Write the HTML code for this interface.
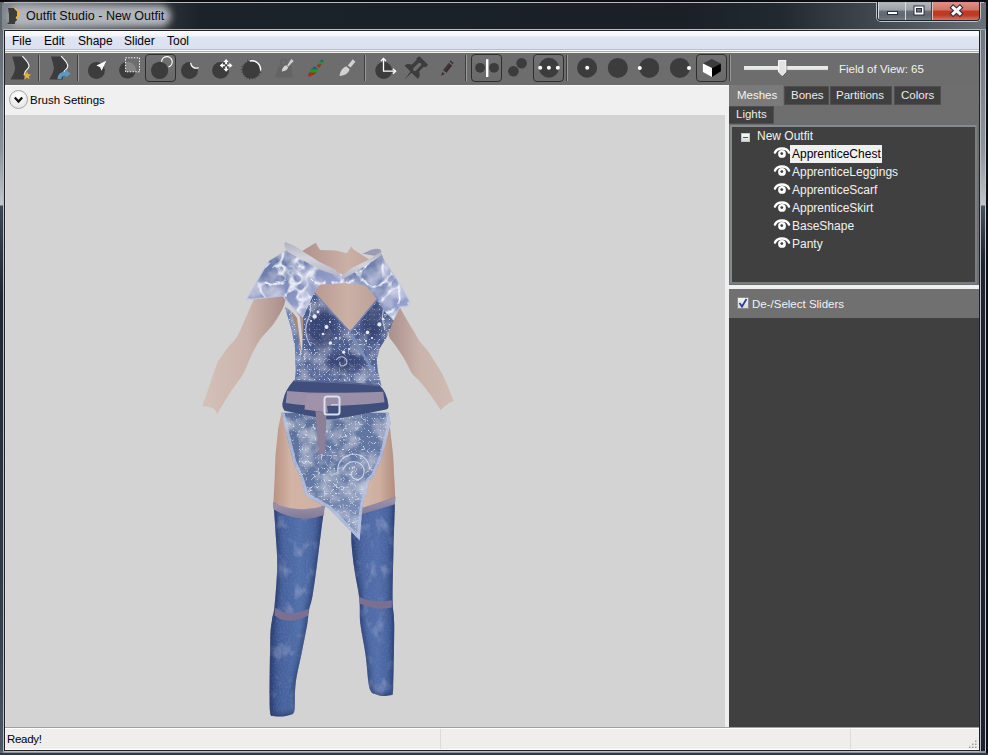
<!DOCTYPE html>
<html><head><meta charset="utf-8">
<style>
*{margin:0;padding:0;box-sizing:border-box}
html,body{width:988px;height:755px;overflow:hidden;background:#10151b}
body{position:relative;font-family:"Liberation Sans",sans-serif;font-size:12px;line-height:14px}
.a{position:absolute;white-space:nowrap}
.menu{top:34px;color:#000;font-size:12px}
.tab{height:19px;background:#3f3f3f;border:1px solid #4f4f4f}
.tt{color:#ececec;font-size:11.5px}
.ti{color:#f2f2f2;font-size:12px}
</style></head><body>
<!-- window frame -->
<div class="a" style="left:0;top:0;width:988px;height:755px;background:#5d656d"></div>
<div class="a" style="left:0;top:0;width:988px;height:2px;background:#0b0d10"></div>
<div class="a" style="left:986px;top:0;width:2px;height:755px;background:#0d1116"></div>
<div class="a" style="left:985px;top:30px;width:1px;height:722px;background:#c2c6ca"></div>
<div class="a" style="left:0;top:753px;width:988px;height:2px;background:#2c3946"></div>
<div class="a" style="left:3px;top:751px;width:983px;height:2px;background:#8c939a"></div>
<div class="a" style="left:0;top:30px;width:3px;height:721px;background:linear-gradient(#5f676f 0px,#8a939b 120px,#c3c8cd 175px,#3c4856 176px,#1e2732 270px,#34404c 600px,#4c5866 721px)"></div>
<div class="a" style="left:980px;top:30px;width:5px;height:721px;background:linear-gradient(#6f7880 0px,#8d959d 120px,#c0c5ca 175px,#45525f 176px,#1e2630 230px,#1a222c 721px)"></div>
<!-- title bar -->
<div class="a" style="left:2px;top:2px;width:984px;height:28px;border-radius:4px 4px 0 0;background:linear-gradient(90deg,#80868c 0px,#30363d 150px,#1c2229 200px,#1b2027 680px,#232930 780px,#4a5159 900px,#6a7178 988px)"></div>
<div class="a" style="left:4px;top:2px;width:980px;height:1px;background:#b7bbbf"></div>
<div class="a" style="left:8px;top:5px;width:163px;height:22px;border-radius:11px;background:#b2b6ba;filter:blur(3.5px)"></div>
<div class="a" style="left:3px;top:29px;width:983px;height:1px;background:#a2a8ae"></div>
<!-- title icon -->
<svg class="a" style="left:0;top:0" width="988" height="31">
<path d="M8 8 L14 8 L17 11 L17 20 L15 22 L15 24 L7 24 L9 22 L9 15 Z" fill="#3c3c3c"/>
<path d="M14.5 8 L16.5 10 L18.5 12 L18.5 16 L16.5 17 L16.5 19" stroke="#f0b530" stroke-width="1.2" fill="none"/>
</svg>
<div class="a" style="left:26px;top:9px;color:#0a0a10;font-size:12.5px">Outfit Studio - New Outfit</div>
<!-- caption buttons -->
<div class="a" style="left:876px;top:2px;width:105px;height:20px;border:1px solid #c0c4c8;border-top:none;border-radius:0 0 5px 5px"></div>
<div class="a" style="left:877px;top:2px;width:103px;height:19px;border:1px solid #20252b;border-top:none;border-radius:0 0 4px 4px;overflow:hidden">
  <div class="a" style="left:0;top:0;width:28px;height:18px;background:linear-gradient(#b3b8bd 0,#9ba1a7 8px,#6a7078 9px,#5f666e 13px,#737a82 18px);border-right:1px solid #d8dce0;border-left:1px solid #d8dce0"></div>
  <div class="a" style="left:28px;top:0;width:26px;height:18px;background:linear-gradient(#b3b8bd 0,#9ba1a7 8px,#6a7078 9px,#5f666e 13px,#737a82 18px);border-right:1px solid #40454b"></div>
  <div class="a" style="left:54px;top:0;width:49px;height:18px;background:linear-gradient(#dc9486 0,#cf7565 8px,#c23a22 9px,#bb3a25 13px,#d5735f 18px);border-left:1px solid #e8c0b8"></div>
</div>
<svg class="a" style="left:870px;top:0" width="118" height="24">
 <rect x="17.5" y="11.5" width="10" height="3" fill="#fff" stroke="#2a3040" stroke-width="1"/>
 <rect x="44" y="6" width="10" height="9" fill="#fff" stroke="#2a3040" stroke-width="1"/>
 <rect x="46.5" y="8.5" width="5" height="3.5" fill="#6d747c" stroke="#2a3040" stroke-width="1"/>
 <path d="M83.2 7.6 L89.8 13.6 M89.8 7.6 L83.2 13.6" stroke="#2a3040" stroke-width="5.2" stroke-linecap="square"/>
 <path d="M83.2 7.6 L89.8 13.6 M89.8 7.6 L83.2 13.6" stroke="#ffffff" stroke-width="3" stroke-linecap="square"/>
</svg>
<!-- client area -->
<div class="a" style="left:3px;top:29px;width:978px;height:723px;border:1px solid #b9bdc1;border-radius:2px"></div>
<div class="a" style="left:4px;top:30px;width:976px;height:721px;background:#1e2226"></div>
<div class="a" style="left:5px;top:31px;width:974px;height:719px;background:#6d6d6d"></div>
<!-- menubar -->
<div class="a" style="left:5px;top:31px;width:974px;height:18px;background:linear-gradient(#fcfcfe 0px,#f2f4fa 5px,#dfe4f1 6px,#dce1f0 18px)"></div>
<div class="a" style="left:5px;top:49px;width:974px;height:1px;background:#b6bccb"></div>
<div class="a" style="left:5px;top:50px;width:974px;height:1px;background:#fdfdfd"></div>
<div class="a" style="left:5px;top:51px;width:974px;height:1px;background:#a9a9a9"></div>
<div class="a" style="left:5px;top:52px;width:974px;height:1px;background:#f2f2f2"></div>
<div class="a menu" style="left:12px">File</div>
<div class="a menu" style="left:44px">Edit</div>
<div class="a menu" style="left:78px">Shape</div>
<div class="a menu" style="left:124px">Slider</div>
<div class="a menu" style="left:167px">Tool</div>
<!-- toolbar -->
<div class="a" style="left:5px;top:53px;width:974px;height:32px;background:#6d6d6d"></div>
<!-- brush settings header -->
<div class="a" style="left:5px;top:85px;width:724px;height:30px;background:#f0f0f0;border-top:1px solid #fbfbfb"></div>
<div class="a" style="left:5px;top:85px;width:1px;height:30px;background:#fafafa"></div>
<div class="a" style="left:9px;top:90px;width:19px;height:19px;border-radius:50%;border:1px solid #a6a6a6;background:radial-gradient(circle at 50% 30%,#ffffff 0,#f4f4f4 40%,#dedede 100%)"></div>
<svg class="a" style="left:0;top:84px" width="40" height="31"><path d="M14.8 13.6 L18.5 17.6 L22.2 13.6" stroke="#111" stroke-width="2.2" fill="none" stroke-linejoin="miter"/></svg>
<div class="a" style="left:30px;top:93px;color:#000;font-size:11.5px">Brush Settings</div>
<!-- viewport -->
<div class="a" style="left:5px;top:115px;width:720px;height:612px;background:#d3d3d3"></div>
<div class="a" style="left:5px;top:115px;width:1px;height:612px;background:#dcdcdc"></div>
<div class="a" style="left:725px;top:115px;width:4px;height:612px;background:#efefef"></div>
<!-- right panel -->
<div class="a" style="left:729px;top:85px;width:250px;height:642px;background:#6e6e6e"></div>
<div class="a" style="left:729px;top:85px;width:54px;height:21px;background:#7a7a7a"></div>
<div class="a tt" style="left:737px;top:88px;color:#f4f4f4">Meshes</div>
<div class="a tab" style="left:784px;top:86px;width:45px"></div>
<div class="a tt" style="left:791px;top:88px">Bones</div>
<div class="a tab" style="left:830px;top:86px;width:62px"></div>
<div class="a tt" style="left:836px;top:88px">Partitions</div>
<div class="a tab" style="left:894px;top:86px;width:47px"></div>
<div class="a tt" style="left:901px;top:88px">Colors</div>
<div class="a tab" style="left:729px;top:106px;width:45px;height:18px;border-left:none"></div>
<div class="a tt" style="left:736px;top:107px">Lights</div>
<!-- tree -->
<div class="a" style="left:730px;top:125px;width:247px;height:159px;background:#404040;border:2px solid #858a90;border-right-color:#7a7e84;border-bottom-color:#787c82"></div>
<div class="a" style="left:741px;top:133px;width:9px;height:9px;border:1px solid #c4c4c4;background:linear-gradient(#fbfbfb,#dadada)"></div>
<div class="a" style="left:743px;top:137px;width:5px;height:1px;background:#3a56a8"></div>
<div class="a ti" style="left:757px;top:129px">New Outfit</div>
<div class="a" style="left:790px;top:145px;width:92px;height:18px;background:#f0f0f0"></div>
<div class="a ti" style="left:792px;top:147px;color:#000">ApprenticeChest</div>
<div class="a ti" style="left:792px;top:165px">ApprenticeLeggings</div>
<div class="a ti" style="left:792px;top:183px">ApprenticeScarf</div>
<div class="a ti" style="left:792px;top:201px">ApprenticeSkirt</div>
<div class="a ti" style="left:792px;top:219px">BaseShape</div>
<div class="a ti" style="left:792px;top:237px">Panty</div>
<svg class="a" style="left:770px;top:140px" width="22" height="110">
 <g id="eye">
 <path d="M5 12.6 C6.5 9 9 8.6 12 8.6 C15 8.6 17.5 9 19 12.6" stroke="#fff" stroke-width="2.5" fill="none" stroke-linecap="round"/>
 <circle cx="12" cy="13.9" r="3.9" fill="#fff"/>
 <circle cx="11.8" cy="13.6" r="1.4" fill="#404040"/>
 </g>
 <use href="#eye" y="18"/><use href="#eye" y="36"/><use href="#eye" y="54"/><use href="#eye" y="72"/><use href="#eye" y="90"/>
</svg>
<!-- splitter + sliders header -->
<div class="a" style="left:729px;top:285px;width:250px;height:4px;background:#f0f0f0"></div>
<div class="a" style="left:729px;top:289px;width:250px;height:29px;background:#707070"></div>
<div class="a" style="left:737px;top:297px;width:12px;height:12px;border:1px solid #8a8a8a;background:linear-gradient(#f4f4f4,#d8d8d8)"></div>
<svg class="a" style="left:737px;top:297px" width="12" height="12"><path d="M2.5 6 L5 9.5 L9.5 2" stroke="#2a3f9a" stroke-width="1.8" fill="none"/></svg>
<div class="a" style="left:752px;top:297px;color:#f2f2f2;font-size:11.5px">De-/Select Sliders</div>
<div class="a" style="left:729px;top:318px;width:250px;height:409px;background:#404040"></div>
<!-- status bar -->
<div class="a" style="left:5px;top:727px;width:974px;height:1px;background:#a0a0a0"></div>
<div class="a" style="left:5px;top:728px;width:974px;height:22px;background:#f0eded;border-top:1px solid #fff;border-bottom:1px solid #fff"></div>
<div class="a" style="left:440px;top:729px;width:1px;height:20px;background:#dcdada"></div>
<div class="a" style="left:850px;top:729px;width:1px;height:20px;background:#dcdada"></div>
<div class="a" style="left:7px;top:732px;color:#000;font-size:11.5px;letter-spacing:-0.3px">Ready!</div>
<svg class="a" style="left:964px;top:738px" width="16" height="12"><g fill="#9a9a9a"><rect x="11" y="2.5" width="1.5" height="1.5"/><rect x="8" y="5.5" width="1.5" height="1.5"/><rect x="11" y="5.5" width="1.5" height="1.5"/><rect x="5" y="8.5" width="1.5" height="1.5"/><rect x="8" y="8.5" width="1.5" height="1.5"/><rect x="11" y="8.5" width="1.5" height="1.5"/></g></svg>
<!--TOOLBAR-->
<svg class="a" style="left:0;top:0" width="988" height="90">
 <defs>
  <linearGradient id="cbr" x1="0" y1="1" x2="0" y2="0">
   <stop offset="0" stop-color="#c02020"/><stop offset="0.3" stop-color="#8a3a20"/><stop offset="0.55" stop-color="#20a020"/><stop offset="0.75" stop-color="#1a7a50"/><stop offset="1" stop-color="#2030c0"/>
  </linearGradient>
  <linearGradient id="pen" x1="0" y1="0" x2="1" y2="1">
   <stop offset="0" stop-color="#5a4a48"/><stop offset="1" stop-color="#221818"/>
  </linearGradient>
  <linearGradient id="btn" x1="0" y1="0" x2="0" y2="1">
   <stop offset="0" stop-color="#727272"/><stop offset="1" stop-color="#6a6a6a"/>
  </linearGradient>
 </defs>
 <!-- separators -->
 <g fill="#3e3e3e">
  <rect x="38" y="55" width="1" height="26"/><rect x="77" y="55" width="1" height="26"/>
  <rect x="364" y="55" width="1" height="26"/><rect x="465" y="55" width="1" height="26"/>
  <rect x="566" y="55" width="1" height="26"/><rect x="729" y="55" width="1" height="26"/>
 </g>
 <g fill="#9a9a9a">
  <rect x="39" y="55" width="1" height="26"/><rect x="78" y="55" width="1" height="26"/>
  <rect x="365" y="55" width="1" height="26"/><rect x="466" y="55" width="1" height="26"/>
  <rect x="567" y="55" width="1" height="26"/><rect x="730" y="55" width="1" height="26"/>
 </g>
 <!-- active button frames -->
 <g fill="url(#btn)" stroke="#2e2e2e" stroke-width="1">
  <rect x="145.5" y="54.5" width="30" height="27" rx="3.5"/>
  <rect x="471.5" y="54.5" width="30" height="27" rx="3.5"/>
  <rect x="533.5" y="54.5" width="30" height="27" rx="3.5"/>
  <rect x="696.5" y="54.5" width="30" height="27" rx="3.5"/>
 </g>
 <!-- icon 1: body + star -->
 <g id="body">
  <path d="M12.3 56.6 L22.6 56.6 C25 59.5 28.8 62.5 29 66 C29.2 68.5 26.2 69.8 25.4 71.2 C24.8 73 24.2 76.5 23.8 79.6 L10.5 79.6 C12.5 76 15.2 71.5 15 67.5 C14.8 63.5 12.8 60 12.3 56.6 Z" fill="#3c3c3c"/>
  <path d="M22.4 56.2 C25 59.3 28.8 62.3 29 65.9 C29.2 68.5 26.2 69.8 25.4 71.2 C24.9 72.4 24.6 73.6 24.4 74.8" stroke="#ffffff" stroke-width="1.1" fill="none"/>
 </g>
 <path d="M27 71.2 L28.1 74.3 L31.3 74.4 L28.8 76.3 L29.7 79.4 L27 77.6 L24.3 79.4 L25.2 76.3 L22.7 74.4 L25.9 74.3 Z" fill="#e9b33a"/>
 <!-- icon 2 -->
 <use href="#body" x="38.8"/>
 <path d="M57.5 79 C57.8 73.5 61.5 71.5 65.5 71.8 L65.2 69.6 L70.6 73.6 L65.8 77.6 L65.6 75.4 C63 75.3 61.2 76.6 61.4 79 Z" fill="#5a9cc2"/>
 <!-- icon 3: circle + cursor -->
 <g fill="#3c3c3c">
  <circle cx="96.4" cy="70.5" r="8.5"/>
  <circle cx="127.5" cy="70.2" r="8.4"/>
  <circle cx="159.6" cy="70.4" r="8.6"/>
  <circle cx="189.5" cy="70.4" r="8.5"/>
  <circle cx="220.5" cy="70.4" r="8.4"/>
  <circle cx="383.7" cy="70.4" r="8.5"/>
  <circle cx="480.1" cy="67.8" r="4.9"/>
  <circle cx="494" cy="67.8" r="4.9"/>
  <circle cx="513.4" cy="71.3" r="5.3"/>
  <circle cx="521.6" cy="63.2" r="5.3"/>
  <circle cx="548.9" cy="67.8" r="10"/>
  <circle cx="587.1" cy="67.8" r="10"/>
  <circle cx="617.8" cy="67.9" r="10"/>
  <circle cx="649.2" cy="67.9" r="10"/>
  <circle cx="679.9" cy="67.9" r="10"/>
 </g>
 <path d="M106.3 60.8 L96.4 65.4 L100.1 67.2 L101.6 70.8 Z" fill="#fff"/>
 <!-- icon 4: dotted rect -->
 <path d="M125.8 71.7 L125.8 58.1 L139.6 58.1 L139.6 71.7 L125.8 71.7 Z" fill="none"/>
 <path d="M125.8 71.7 L135.9 71.7 A8.4 8.4 0 0 0 125.8 61.9 Z" fill="#858585"/>
 <rect x="125.5" y="57.8" width="14" height="14" fill="none" stroke="#fff" stroke-width="1" stroke-dasharray="1.4 1.4"/>
 <!-- icon 5: open circle -->
 <path d="M161.6 61.7 A5.3 5.3 0 1 1 168.5 67" stroke="#fff" stroke-width="1.2" fill="none"/>
 <!-- icon 6: crescent -->
 <circle cx="196.3" cy="62.2" r="5.6" fill="#6d6d6d"/>
 <path d="M190.6 62.8 A5.6 5.6 0 0 0 198.6 67.6" stroke="#fff" stroke-width="1.3" fill="none"/>
 <!-- icon 7: move arrows -->
 <g fill="#fff">
  <path d="M226.1 59 L223.4 62.1 L225.2 62.1 L225.2 64.2 L227 64.2 L227 62.1 L228.8 62.1 Z"/>
  <path d="M226.1 71.8 L223.4 68.7 L225.2 68.7 L225.2 66.6 L227 66.6 L227 68.7 L228.8 68.7 Z"/>
  <path d="M219.7 65.4 L222.8 62.7 L222.8 64.5 L224.9 64.5 L224.9 66.3 L222.8 66.3 L222.8 68.1 Z"/>
  <path d="M232.5 65.4 L229.4 62.7 L229.4 64.5 L227.3 64.5 L227.3 66.3 L229.4 66.3 L229.4 68.1 Z"/>
 </g>
 <!-- icon 8: spiky circle -->
 <circle cx="251.2" cy="69.8" r="8.8" fill="#3c3c3c"/>
 <path d="M249.6 62.4 L250.2 58.5 L251.4 62.3 Z M247.6 63.2 L247.1 59.3 L249.3 62.5 Z M245.9 64.4 L245.1 62.0 L247.3 63.3 Z M244.6 66.2 L243.1 64.0 L245.6 64.7 Z M243.8 68.2 L240.7 66.2 L244.4 66.5 Z M243.7 70.4 L240.2 69.3 L243.7 68.6 Z M244.1 72.5 L240.7 72.4 L243.7 70.7 Z M245.2 74.4 L242.3 75.0 L244.3 72.8 Z M246.7 75.9 L243.9 77.7 L245.4 74.7 Z M248.7 76.9 L246.4 79.4 L247.0 76.1 Z M250.8 77.3 L249.3 80.4 L249.0 77.0 Z M252.9 77.1 L252.3 79.8 L251.2 77.4 Z M255.0 76.4 L255.3 79.5 L253.3 77.1 Z M256.7 75.0 L257.8 77.8 L255.3 76.2 Z M257.9 73.2 L260.3 75.9 L256.9 74.7 Z M258.6 71.2 L262.1 73.2 L258.1 72.9 Z " fill="#3c3c3c"/>
 <path d="M249.8 61 A8.8 8.8 0 0 1 260.6 70.5" stroke="#fff" stroke-width="1.3" fill="none"/>
 <!-- icon 9: weight + brush -->
 <path d="M278.5 66 L291.2 66 L292.8 77.5 L275.2 77.5 Z" fill="#646464"/>
 <circle cx="283.7" cy="62.5" r="3" fill="none" stroke="#646464" stroke-width="1.6"/>
 <path d="M281.8 71.5 C282 68 283.5 66 286.2 65.2 L288.2 67.3 C287.5 70 285.2 71.3 281.8 71.5 Z" fill="#d2d2d2"/>
 <path d="M287.2 65.6 L291.3 58.9 L293.6 61 L288.2 66.8 Z" fill="#d2d2d2"/>
 <!-- icon 10: color brush -->
 <path d="M308 76.5 C308.5 71.5 311 68 315 66.5 L318.2 69.3 C317 73.5 313.5 76 308 76.5 Z" fill="url(#cbr)"/>
 <path d="M316.5 65.8 L321.6 59.3 L324.2 61.5 L319.2 67.8 Z" fill="url(#cbr)"/>
 <!-- icon 11: white brush -->
 <path d="M339.5 76 C340 71.3 342.3 67.8 346.3 66.3 L349.6 69.3 C348.5 73.3 345 75.6 339.5 76 Z" fill="#d2d2d2"/>
 <path d="M347.8 65.5 L352.8 59.3 L355.4 61.8 L350.6 67.6 Z" fill="#d2d2d2"/>
 <!-- icon 12: axis -->
 <g stroke="#fff" stroke-width="1.3" fill="none">
  <path d="M383.5 58.5 L383.5 71.2 L395.5 71.2"/>
  <path d="M381 61 L383.5 58.4 L386 61"/>
  <path d="M393 68.7 L395.6 71.2 L393 73.7"/>
 </g>
 <!-- icon 13: pin -->
 <path d="M419.3 56.3 L428.1 64.8 L425.5 67.5 L424 66.5 L419.2 71.3 L419.8 75.8 L418 79 L411.5 72.7 L404.6 79.6 L410.5 71.5 L404.4 65.6 L407.5 64 L412 64.5 L416.8 59.8 L416.2 58.4 Z" fill="#3c3c3c"/>
 <path d="M413.3 68.3 L418.5 63.1 A1.8 1.8 0 0 1 421 65.6 L415.8 70.8 A1.8 1.8 0 0 1 413.3 68.3 Z" fill="#6d6d6d"/>
 <!-- icon 14: pencil -->
 <path d="M443 70 L448.8 62.8 L452.2 65.6 L446.4 72.8 Z" fill="url(#pen)"/>
 <path d="M449.6 61.6 L450.6 60.4 L453.4 63 L452.8 64.2 Z" fill="#3a2a2a"/>
 <path d="M441.2 75.8 L442.2 72 L444.6 74 Z" fill="#3a2a2a"/>
 <!-- mirror icon -->
 <rect x="486" y="59.2" width="2.4" height="17.8" fill="#fff"/>
 <!-- dots -->
 <g fill="#fff">
  <circle cx="540.2" cy="67.8" r="2"/><circle cx="548.9" cy="67.8" r="2"/><circle cx="557.8" cy="67.8" r="2"/>
  <circle cx="587.2" cy="67.8" r="2"/>
  <circle cx="639.8" cy="67.9" r="2"/>
  <circle cx="689" cy="67.9" r="2"/>
 </g>
 <!-- cube -->
 <path d="M711.8 59.1 L720.9 63.4 L712 67.9 L702.9 63.4 Z" fill="#3c3c3c"/>
 <path d="M702.9 63.4 L712 67.9 L712 77 L702.9 72 Z" fill="#ffffff"/>
 <path d="M712 67.9 L720.9 63.4 L720.9 71.2 L712 77 Z" fill="#000000"/>
 <!-- slider -->
 <rect x="744" y="66" width="84" height="4" fill="#e8eaea"/><rect x="744" y="69.5" width="84" height="0.8" fill="#9a9a9a" opacity="0.5"/>
 <path d="M778.5 60.5 L786 60.5 L786 71.8 L782.2 75.6 L778.5 71.8 Z" fill="#e2e2e2" stroke="#fafafa" stroke-width="1"/>
 <path d="M786.8 61 L786.8 72 L782.6 76.4" stroke="#505050" stroke-width="0.8" fill="none" opacity="0.6"/>
</svg>
<div class="a" style="left:839px;top:62px;color:#f2f2f2;font-size:11.5px">Field of View: 65</div>

<!--FIGURE-->
<svg class="a" style="left:0;top:0" width="988" height="755">
 <defs>
  <linearGradient id="skinL" gradientUnits="userSpaceOnUse" x1="205" y1="0" x2="285" y2="0">
   <stop offset="0" stop-color="#d3c0b8"/><stop offset="0.55" stop-color="#cbb4ac"/><stop offset="1" stop-color="#aa8f89"/>
  </linearGradient>
  <linearGradient id="skinR" gradientUnits="userSpaceOnUse" x1="390" y1="0" x2="455" y2="0">
   <stop offset="0" stop-color="#ab918b"/><stop offset="0.45" stop-color="#c9b3ab"/><stop offset="1" stop-color="#d0bcb4"/>
  </linearGradient>
  <linearGradient id="skinC" gradientUnits="userSpaceOnUse" x1="300" y1="0" x2="395" y2="0">
   <stop offset="0" stop-color="#ae918b"/><stop offset="0.5" stop-color="#cbb0a6"/><stop offset="1" stop-color="#b39892"/>
  </linearGradient>
  <linearGradient id="thighL" gradientUnits="userSpaceOnUse" x1="273" y1="0" x2="325" y2="0">
   <stop offset="0" stop-color="#b89282"/><stop offset="0.35" stop-color="#d2b4a5"/><stop offset="1" stop-color="#cfb0a2"/>
  </linearGradient>
  <linearGradient id="thighR" gradientUnits="userSpaceOnUse" x1="355" y1="0" x2="396" y2="0">
   <stop offset="0" stop-color="#d6bcad"/><stop offset="0.6" stop-color="#cdae9f"/><stop offset="1" stop-color="#b08c7e"/>
  </linearGradient>
  <linearGradient id="legL" gradientUnits="userSpaceOnUse" x1="270" y1="0" x2="324" y2="0">
   <stop offset="0" stop-color="#324a84"/><stop offset="0.2" stop-color="#45609c"/><stop offset="0.55" stop-color="#5270aa"/><stop offset="0.85" stop-color="#46619c"/><stop offset="1" stop-color="#354d86"/>
  </linearGradient>
  <linearGradient id="legR" gradientUnits="userSpaceOnUse" x1="351" y1="0" x2="396" y2="0">
   <stop offset="0" stop-color="#354d86"/><stop offset="0.3" stop-color="#4d68a4"/><stop offset="0.6" stop-color="#526eaa"/><stop offset="0.9" stop-color="#435e9a"/><stop offset="1" stop-color="#31487f"/>
  </linearGradient>
  <linearGradient id="dress" x1="0" y1="0" x2="0" y2="1">
   <stop offset="0" stop-color="#4c5c8c"/><stop offset="0.6" stop-color="#506294"/><stop offset="1" stop-color="#5a6c9c"/>
  </linearGradient>
  <linearGradient id="padL" gradientUnits="userSpaceOnUse" x1="255" y1="250" x2="310" y2="315">
   <stop offset="0" stop-color="#62729f"/><stop offset="0.5" stop-color="#7888b6"/><stop offset="1" stop-color="#a0a8d2"/>
  </linearGradient>
  <linearGradient id="padR" gradientUnits="userSpaceOnUse" x1="350" y1="260" x2="405" y2="315">
   <stop offset="0" stop-color="#6a7aa8"/><stop offset="0.5" stop-color="#7a8ab8"/><stop offset="1" stop-color="#9ca6d0"/>
  </linearGradient>
  <linearGradient id="skirt" gradientUnits="userSpaceOnUse" x1="300" y1="415" x2="360" y2="540">
   <stop offset="0" stop-color="#5c709c"/><stop offset="0.55" stop-color="#667aa6"/><stop offset="1" stop-color="#8e9ec4"/>
  </linearGradient>
  <filter id="spk3" x="-5%" y="-5%" width="110%" height="110%">
   <feTurbulence type="turbulence" baseFrequency="0.06" numOctaves="2" seed="13" result="n"/>
   <feColorMatrix in="n" type="matrix" values="0 0 0 0 0.9  0 0 0 0 0.93  0 0 0 0 1  -5 0 0 0 0.95" result="w"/>
   <feComposite in="w" in2="SourceAlpha" operator="in" result="wm"/>
   <feTurbulence type="fractalNoise" baseFrequency="0.05" numOctaves="3" seed="21" result="n2"/>
   <feColorMatrix in="n2" type="matrix" values="0 0 0 0 0.82  0 0 0 0 0.82  0 0 0 0 0.95  1.5 0 0 0 -0.6" result="w2"/>
   <feComposite in="w2" in2="SourceAlpha" operator="in" result="wm2"/>
   <feMerge><feMergeNode in="SourceGraphic"/><feMergeNode in="wm2"/><feMergeNode in="wm"/></feMerge>
  </filter>
  <filter id="spk4" x="-5%" y="-5%" width="110%" height="110%">
   <feTurbulence type="turbulence" baseFrequency="0.2" numOctaves="2" seed="5" result="n"/>
   <feColorMatrix in="n" type="matrix" values="0 0 0 0 0.85  0 0 0 0 0.88  0 0 0 0 1  -6 0 0 0 0.65" result="w"/>
   <feComposite in="w" in2="SourceAlpha" operator="in" result="wm"/>
   <feTurbulence type="fractalNoise" baseFrequency="0.06" numOctaves="3" seed="31" result="n2"/>
   <feColorMatrix in="n2" type="matrix" values="0 0 0 0 0.75  0 0 0 0 0.8  0 0 0 0 0.92  1.2 0 0 0 -0.55" result="w2"/>
   <feComposite in="w2" in2="SourceAlpha" operator="in" result="wm2"/>
   <feMerge><feMergeNode in="SourceGraphic"/><feMergeNode in="wm2"/><feMergeNode in="wm"/></feMerge>
  </filter>
  <filter id="spk2" x="-5%" y="-5%" width="110%" height="110%">
   <feTurbulence type="turbulence" baseFrequency="0.16" numOctaves="2" seed="9" result="n"/>
   <feColorMatrix in="n" type="matrix" values="0 0 0 0 0.86  0 0 0 0 0.9  0 0 0 0 1  -6 0 0 0 0.7" result="w"/>
   <feComposite in="w" in2="SourceAlpha" operator="in" result="wm"/>
   <feTurbulence type="fractalNoise" baseFrequency="0.05" numOctaves="3" seed="21" result="n2"/>
   <feColorMatrix in="n2" type="matrix" values="0 0 0 0 0.8  0 0 0 0 0.84  0 0 0 0 0.94  1.4 0 0 0 -0.58" result="w2"/>
   <feComposite in="w2" in2="SourceAlpha" operator="in" result="wm2"/>
   <feMerge><feMergeNode in="SourceGraphic"/><feMergeNode in="wm2"/><feMergeNode in="wm"/></feMerge>
  </filter>
  <linearGradient id="band" x1="0" y1="0" x2="0" y2="1">
   <stop offset="0" stop-color="#9e94ac"/><stop offset="1" stop-color="#837a98"/>
  </linearGradient>
  <filter id="spk" x="-5%" y="-5%" width="110%" height="110%">
   <feTurbulence type="turbulence" baseFrequency="0.09" numOctaves="2" seed="4" result="n"/>
   <feColorMatrix in="n" type="matrix" values="0 0 0 0 0.88  0 0 0 0 0.91  0 0 0 0 1  -6 0 0 0 0.85" result="w"/>
   <feComposite in="w" in2="SourceAlpha" operator="in" result="wm"/>
   <feTurbulence type="fractalNoise" baseFrequency="0.05" numOctaves="3" seed="21" result="n2"/>
   <feColorMatrix in="n2" type="matrix" values="0 0 0 0 0.8  0 0 0 0 0.82  0 0 0 0 0.92  1.6 0 0 0 -0.62" result="w2"/>
   <feComposite in="w2" in2="SourceAlpha" operator="in" result="wm2"/>
   <feMerge><feMergeNode in="SourceGraphic"/><feMergeNode in="wm2"/><feMergeNode in="wm"/></feMerge>
  </filter>
  <filter id="mot" x="-5%" y="-5%" width="110%" height="110%">
   <feTurbulence type="fractalNoise" baseFrequency="0.08 0.05" numOctaves="4" seed="11" result="n"/>
   <feColorMatrix in="n" type="matrix" values="0 0 0 0 0.5  0 0 0 0 0.6  0 0 0 0 0.85  0.9 0 0 0 -0.5" result="w"/>
   <feComposite in="w" in2="SourceAlpha" operator="in" result="wm"/>
   <feTurbulence type="fractalNoise" baseFrequency="0.6" numOctaves="1" seed="3" result="g"/>
   <feColorMatrix in="g" type="matrix" values="0 0 0 0 0.2  0 0 0 0 0.28  0 0 0 0 0.5  0.6 0 0 0 -0.25" result="gw"/>
   <feComposite in="gw" in2="SourceAlpha" operator="in" result="gm"/>
   <feMerge><feMergeNode in="SourceGraphic"/><feMergeNode in="wm"/><feMergeNode in="gm"/></feMerge>
  </filter>
 </defs>
 <!-- arms -->
 <path d="M254.7 298.0 C252.1 302.7 247.6 313.8 244.6 320.4 C241.6 327.0 239.2 333.2 236.5 337.6 C233.8 342.0 231.0 343.5 228.4 346.7 C225.8 349.9 222.9 354.2 221.0 357.0 C219.1 359.8 219.1 358.7 217.2 363.3 C215.3 367.9 212.3 377.4 209.8 384.5 C207.3 391.6 203.6 402.6 202.4 406.2 C203.3 406.3 205.7 406.3 207.6 406.7 C209.5 407.1 212.4 407.6 214.0 408.8 C215.6 410.0 216.7 413.2 217.2 414.1 C219.3 410.6 225.7 399.5 229.9 393.0 C234.1 386.5 239.9 379.1 242.6 375.0 C245.2 370.9 244.2 372.1 245.8 368.6 C247.4 365.1 249.6 358.8 252.1 353.8 C254.6 348.8 257.2 343.7 260.8 338.6 C264.4 333.5 270.0 329.0 273.9 323.4 C277.8 317.8 282.1 310.3 284.1 305.2 C286.1 300.1 285.7 295.0 286.0 293.0 C281.7 292.8 264.3 292.2 260.0 292.0 C259.1 293.0 257.3 293.3 254.7 298.0 Z" fill="url(#skinL)"/>
 <path d="M399.4 300.0 C399.4 300.9 398.2 302.4 399.4 305.7 C400.6 308.9 404.3 315.2 406.7 319.5 C409.1 323.8 411.9 328.0 414.0 331.6 C416.1 335.2 417.2 338.0 419.6 341.3 C422.0 344.6 425.7 348.0 428.4 351.7 C431.1 355.4 433.1 358.9 435.8 363.3 C438.5 367.7 441.3 371.9 444.3 378.2 C447.3 384.5 452.2 397.2 453.8 401.0 C452.9 401.4 450.7 402.1 448.5 403.6 C446.3 405.1 441.9 408.9 440.6 410.0 C438.9 407.5 433.9 399.9 430.5 395.1 C427.1 390.3 422.9 384.9 419.9 381.4 C416.9 377.9 414.6 376.7 412.5 373.9 C410.4 371.1 408.8 367.4 407.2 364.4 C405.6 361.4 404.9 359.6 402.6 356.0 C400.4 352.4 396.0 346.5 393.7 343.0 C391.4 339.5 389.2 338.7 388.9 334.9 C388.6 331.1 391.2 326.1 392.1 320.3 C393.0 314.5 393.7 303.4 394.0 300.0 C394.9 300.0 398.5 300.0 399.4 300.0 Z" fill="url(#skinR)"/>
 <!-- torso skin -->
 <path d="M302.3 251 L315.6 242.7 L320.1 249.9 L335.7 250.5 L346.8 253.3 L351.3 246.6 L353.5 249.4 L368 258.8 L378 260 L394 300 L392.2 323.8 L387.4 335.7 L380.3 347.6 L350 348 L303 345 L300 317 L288 300 Z" fill="url(#skinC)"/>
 <path d="M291.5 311 L297 318 L301.5 352 L296.5 342 L293 326 Z" fill="#a8887e"/>
 <!-- thighs -->
 <path d="M281.5 413 L278.3 427.5 L275.5 455 L274.6 480 L273.4 502.4 L298 512 L324.6 505.8 L340 498 L363.3 508.4 L395.2 497.2 L394.3 480 L393 455 L390.6 433.9 L388.5 413 Z" fill="url(#thighL)"/>
 <path d="M360 413 L388.5 413 L390.6 433.9 L393 455 L394.3 480 L395.2 497.2 L363.3 508.4 L355 480 Z" fill="url(#thighR)"/>
 <!-- legs -->
 <g filter="url(#mot)">
  <path d="M273.4 502.4 C277.5 504.0 289.5 511.3 298.0 511.9 C306.5 512.5 320.2 506.8 324.6 505.8 C324.0 510.1 322.4 521.7 321.1 531.7 C319.8 541.8 318.2 555.4 316.8 566.1 C315.4 576.8 313.8 588.7 312.5 596.0 C311.2 603.3 309.9 605.4 309.0 610.0 C308.1 614.6 308.5 616.8 307.4 623.6 C306.2 630.4 304.1 641.1 302.1 651.0 C300.2 660.9 296.9 673.4 295.7 682.9 C294.5 692.4 295.1 703.1 294.7 708.3 C294.2 713.5 293.3 713.0 293.0 714.0 C291.3 714.4 286.5 716.2 283.0 716.5 C279.5 716.8 273.8 716.1 272.0 716.0 C271.6 714.3 270.0 718.7 269.7 706.0 C269.4 693.3 269.9 654.3 270.3 640.0 C270.7 625.7 271.3 625.6 272.0 620.0 C272.7 614.4 273.6 615.6 274.5 606.6 C275.4 597.6 277.0 578.5 277.2 566.0 C277.4 553.5 276.1 542.3 275.5 531.7 C274.9 521.1 273.8 507.3 273.4 502.4 Z" fill="url(#legL)"/>
  <path d="M363.3 508.4 C368.6 506.5 389.9 499.1 395.2 497.2 C394.9 505.8 393.9 531.7 393.5 548.9 C393.1 566.1 392.5 588.0 392.6 600.5 C392.7 613.0 394.1 609.2 394.2 623.6 C394.3 638.0 393.6 675.2 393.2 687.1 C392.8 699.0 392.2 693.7 392.0 695.0 C390.3 695.2 385.3 696.3 382.0 696.0 C378.7 695.7 373.7 693.5 372.0 693.0 C371.5 691.7 369.9 691.3 368.8 685.0 C367.7 678.7 367.0 665.5 365.6 655.3 C364.2 645.1 361.4 633.1 360.3 623.6 C359.2 614.1 360.4 607.7 359.3 598.1 C358.2 588.5 355.2 576.9 353.9 566.1 C352.6 555.3 350.9 541.9 351.3 533.4 C351.7 524.9 354.0 519.2 356.0 515.0 C358.0 510.8 362.1 509.5 363.3 508.4 Z" fill="url(#legR)"/>
 </g>
 <clipPath id="lclip"><path d="M273.4 502.4 C277.5 504.0 289.5 511.3 298.0 511.9 C306.5 512.5 320.2 506.8 324.6 505.8 C324.0 510.1 322.4 521.7 321.1 531.7 C319.8 541.8 318.2 555.4 316.8 566.1 C315.4 576.8 313.8 588.7 312.5 596.0 C311.2 603.3 309.9 605.4 309.0 610.0 C308.1 614.6 308.5 616.8 307.4 623.6 C306.2 630.4 304.1 641.1 302.1 651.0 C300.2 660.9 296.9 673.4 295.7 682.9 C294.5 692.4 295.1 703.1 294.7 708.3 C294.2 713.5 293.3 713.0 293.0 714.0 C291.3 714.4 286.5 716.2 283.0 716.5 C279.5 716.8 273.8 716.1 272.0 716.0 C271.6 714.3 270.0 718.7 269.7 706.0 C269.4 693.3 269.9 654.3 270.3 640.0 C270.7 625.7 271.3 625.6 272.0 620.0 C272.7 614.4 273.6 615.6 274.5 606.6 C275.4 597.6 277.0 578.5 277.2 566.0 C277.4 553.5 276.1 542.3 275.5 531.7 C274.9 521.1 273.8 507.3 273.4 502.4 Z"/><path d="M363.3 508.4 C368.6 506.5 389.9 499.1 395.2 497.2 C394.9 505.8 393.9 531.7 393.5 548.9 C393.1 566.1 392.5 588.0 392.6 600.5 C392.7 613.0 394.1 609.2 394.2 623.6 C394.3 638.0 393.6 675.2 393.2 687.1 C392.8 699.0 392.2 693.7 392.0 695.0 C390.3 695.2 385.3 696.3 382.0 696.0 C378.7 695.7 373.7 693.5 372.0 693.0 C371.5 691.7 369.9 691.3 368.8 685.0 C367.7 678.7 367.0 665.5 365.6 655.3 C364.2 645.1 361.4 633.1 360.3 623.6 C359.2 614.1 360.4 607.7 359.3 598.1 C358.2 588.5 355.2 576.9 353.9 566.1 C352.6 555.3 350.9 541.9 351.3 533.4 C351.7 524.9 354.0 519.2 356.0 515.0 C358.0 510.8 362.1 509.5 363.3 508.4 Z"/></clipPath>
 <filter id="bl2"><feGaussianBlur stdDeviation="2.2"/></filter>
 <g clip-path="url(#lclip)"><g filter="url(#bl2)" fill="none" stroke="#22325e" stroke-width="6" opacity="0.55"><path d="M273.4 502.4 C277.5 504.0 289.5 511.3 298.0 511.9 C306.5 512.5 320.2 506.8 324.6 505.8 C324.0 510.1 322.4 521.7 321.1 531.7 C319.8 541.8 318.2 555.4 316.8 566.1 C315.4 576.8 313.8 588.7 312.5 596.0 C311.2 603.3 309.9 605.4 309.0 610.0 C308.1 614.6 308.5 616.8 307.4 623.6 C306.2 630.4 304.1 641.1 302.1 651.0 C300.2 660.9 296.9 673.4 295.7 682.9 C294.5 692.4 295.1 703.1 294.7 708.3 C294.2 713.5 293.3 713.0 293.0 714.0 C291.3 714.4 286.5 716.2 283.0 716.5 C279.5 716.8 273.8 716.1 272.0 716.0 C271.6 714.3 270.0 718.7 269.7 706.0 C269.4 693.3 269.9 654.3 270.3 640.0 C270.7 625.7 271.3 625.6 272.0 620.0 C272.7 614.4 273.6 615.6 274.5 606.6 C275.4 597.6 277.0 578.5 277.2 566.0 C277.4 553.5 276.1 542.3 275.5 531.7 C274.9 521.1 273.8 507.3 273.4 502.4 Z"/><path d="M363.3 508.4 C368.6 506.5 389.9 499.1 395.2 497.2 C394.9 505.8 393.9 531.7 393.5 548.9 C393.1 566.1 392.5 588.0 392.6 600.5 C392.7 613.0 394.1 609.2 394.2 623.6 C394.3 638.0 393.6 675.2 393.2 687.1 C392.8 699.0 392.2 693.7 392.0 695.0 C390.3 695.2 385.3 696.3 382.0 696.0 C378.7 695.7 373.7 693.5 372.0 693.0 C371.5 691.7 369.9 691.3 368.8 685.0 C367.7 678.7 367.0 665.5 365.6 655.3 C364.2 645.1 361.4 633.1 360.3 623.6 C359.2 614.1 360.4 607.7 359.3 598.1 C358.2 588.5 355.2 576.9 353.9 566.1 C352.6 555.3 350.9 541.9 351.3 533.4 C351.7 524.9 354.0 519.2 356.0 515.0 C358.0 510.8 362.1 509.5 363.3 508.4 Z"/></g></g>
 <!-- bands -->
 <path d="M273.4 502.4 Q298 514 324.6 505.8 L324 515.3 Q298 524 273.6 509.6 Z" fill="url(#band)"/>
 <path d="M360 508.6 L395.2 497.2 L395 504.2 L361 514.6 Z" fill="url(#band)"/>
 <path d="M275.2 607.8 Q288 618 308.6 608.8 L308 615.8 Q288 626 274.5 615.6 Z" fill="#7c7092"/>
 <path d="M359.4 597 Q375 604 391.8 600.2 L391.8 607.6 Q375 611 359.6 603.6 Z" fill="#7c7092"/>
 <!-- top clothing -->
 <g filter="url(#spk4)">
  <path d="M284.9 307.1 L291.5 329.8 L295 347.6 L295.6 371.4 L294 390 L299 390 L300.5 371 L300 347 L297 330 L290 310 Z" fill="#6478aa"/>
  <path d="M303 317 L314.5 292.3 L350.1 331.2 L376.9 299 L385 312 L398 309.5 L392.2 323.8 L387.4 335.7 L380.3 347.6 L376.7 359.5 L377.9 371.4 L381.5 386 L296 386 L298 371 L302.2 347.6 L303.4 329.8 Z" fill="url(#dress)"/>

 </g>
 <g filter="url(#spk3)">
  <path d="M285.3 242.2 L288 249.3 L268.6 261.2 L246.6 299.4 L255.5 298.8 L282.9 295.8 L287.7 301.8 L296 311.3 L303.2 317.2 L309 304 L314.5 292.3 L320 284.5 L345 283 L345 276 L300 255 Z" fill="url(#padL)"/>
  <path d="M344 283 L365.7 285.6 L376.9 299 L385 312 L393.4 320.2 L399.7 306.7 L408.2 305.9 L410 301.8 L393.9 274.3 L385 262 L381.5 254 L350 272 L344 276 Z" fill="url(#padR)"/>
 </g>
 <clipPath id="dclip"><path d="M303 317 L314.5 292.3 L350.1 331.2 L376.9 299 L385 312 L398 309.5 L392.2 323.8 L387.4 335.7 L380.3 347.6 L376.7 359.5 L377.9 371.4 L381.5 386 L296 386 L298 371 L302.2 347.6 L303.4 329.8 Z"/></clipPath>
 <filter id="bl1"><feGaussianBlur stdDeviation="3"/></filter>
 <filter id="bl05"><feGaussianBlur stdDeviation="0.5"/></filter>
 <g clip-path="url(#dclip)">
  <g filter="url(#bl1)" fill="#27335e" opacity="0.55">
   <ellipse cx="322" cy="328" rx="14" ry="22"/>
   <ellipse cx="372" cy="322" rx="10" ry="18"/>
   <ellipse cx="345" cy="362" rx="20" ry="9"/>
  </g>
  <g fill="#e8ecf8" filter="url(#bl05)">
   <circle cx="314.6" cy="316.5" r="2.2"/><circle cx="318" cy="312" r="1.4"/><circle cx="311" cy="321" r="1.1"/>
   <circle cx="326.5" cy="327" r="2.0"/><circle cx="323" cy="334" r="1.3"/><circle cx="330" cy="322" r="1.0"/>
   <circle cx="330.4" cy="343" r="1.7"/><circle cx="336" cy="338" r="1.1"/>
   <circle cx="343.7" cy="352.2" r="1.6"/><circle cx="349" cy="349" r="1.0"/>
   <circle cx="379.4" cy="324.4" r="2.1"/><circle cx="383" cy="319" r="1.3"/>
   <circle cx="367.5" cy="332.4" r="1.8"/><circle cx="372" cy="338" r="1.1"/><circle cx="366" cy="341" r="1.0"/>
  </g>
  <g fill="none" stroke="#d8deef" stroke-width="1.1" opacity="0.8">
   <path d="M336 360 q5 -6 10 -1 q3 5 -3 7 q-4 0 -3 -4"/>
   <path d="M309 300 q4 10 -2 22 q-4 12 4 24"/>
   <path d="M385 305 q-5 12 0 24"/>
  </g>
  <path d="M314.5 292.3 L350.1 331.2 L376.9 299" fill="none" stroke="#7286b6" stroke-width="2.4"/>
  <path d="M350.3 333.7 L374.1 372" fill="none" stroke="#7a8ebc" stroke-width="2.6"/>
 </g>
 <!-- collars -->
 <linearGradient id="col" x1="0" y1="0" x2="0" y2="1"><stop offset="0" stop-color="#aeb0c0"/><stop offset="0.45" stop-color="#d4d4dc"/><stop offset="1" stop-color="#b4b4c4"/></linearGradient>
 <path d="M285 242 Q292 244 300 249.4 L320 262.2 L335 269.4 L341.5 277 L335 275 L320 269.4 L300 258.8 L288 252 Q283 246 285 242 Z" fill="url(#col)"/>
 <path d="M362.4 253.8 Q372 249 375.8 248.8 Q381 248 381.5 252 L376 256 Z" fill="#9a9cb6"/>
 <path d="M341 276.6 L351.3 268.3 L366.9 260.5 L375.8 254.9 L381 251.6 L381.5 255 L374.7 259.9 L358 270.5 L342 279.5 Z" fill="url(#col)"/>
 <!-- skirt -->
 <g filter="url(#spk2)">
  <path d="M281.5 412.7 L388.5 412.7 L390.6 423.3 L382.1 457.2 L373.7 476.3 L369.4 480 L362.5 507.6 L359.5 540.3 L328.9 508.4 L305.6 495.5 L301.3 480 L293.1 461.5 Z" fill="url(#skirt)"/>
 </g>
 <clipPath id="sclip"><path d="M281.5 412.7 L388.5 412.7 L390.6 423.3 L382.1 457.2 L373.7 476.3 L369.4 480 L362.5 507.6 L359.5 540.3 L328.9 508.4 L305.6 495.5 L301.3 480 L293.1 461.5 Z"/></clipPath>
 <g clip-path="url(#sclip)"><path d="M281.5 412.7 L293.1 461.5 L301.3 480 L305.6 495.5 L328.9 508.4 L359.5 540.3 L362.5 507.6 L369.4 480 L373.7 476.3 L382.1 457.2 L390.6 423.3 L388.5 412.7" fill="none" stroke="#b8c4e2" stroke-width="6" opacity="0.8" filter="url(#bl05)"/>
 <g fill="none" stroke="#d6ddf0" stroke-width="1.2" opacity="0.85"><path d="M343 470 q4 -10 14 -8 q10 4 6 14 q-4 6 -10 2 q-4 -4 0 -7"/><path d="M338 474 q-2 -16 14 -20 q16 0 18 16"/></g></g>
 <path d="M268.6 261.2 L246.6 299.4 L255.5 298.8 L282.9 295.8 L287.7 301.8 L296 311.3 L303.2 317.2" fill="none" stroke="#c0c8e8" stroke-width="1.4" opacity="0.7"/>
 <path d="M393.9 274.3 L410 301.8 L408.2 305.9 L399.7 306.7 L393.4 320.2" fill="none" stroke="#c0c8e8" stroke-width="1.4" opacity="0.7"/>
 <!-- belt -->
 <path d="M293.7 380.5 Q340 381 379.2 385.1 Q387 392 388.4 405 Q389 409 386 409.5 Q330 421 326.6 419.3 Q300 414 284.5 410.8 Q281 406 283.2 400 Q285 390 293.7 380.5 Z" fill="#3f4e7a"/>
 <path d="M287.1 391 Q322.6 394.3 383.2 391.7 L384.5 402.2 Q322.6 409.5 285.8 402.9 Z" fill="#9a8fa8"/>
 <path d="M293.7 381 Q340 382 379.2 385.6" stroke="#5a6a98" stroke-width="1.2" fill="none"/>
 <path d="M306 394.5 L325 394 L328 412.5 L304.5 409.5 Z" fill="#a092aa"/>
 <path d="M315.5 411 L326.5 412 L325 453 L318.6 453 Z" fill="#8c7f98"/>
 <rect x="324.5" y="396.5" width="15" height="18" rx="2.5" fill="none" stroke="#d8e0ee" stroke-width="2"/>
 <path d="M331 404.8 L338 404.8" stroke="#d4dcea" stroke-width="1.2"/>
</svg>


<!--/FIGURE-->
</body></html>
